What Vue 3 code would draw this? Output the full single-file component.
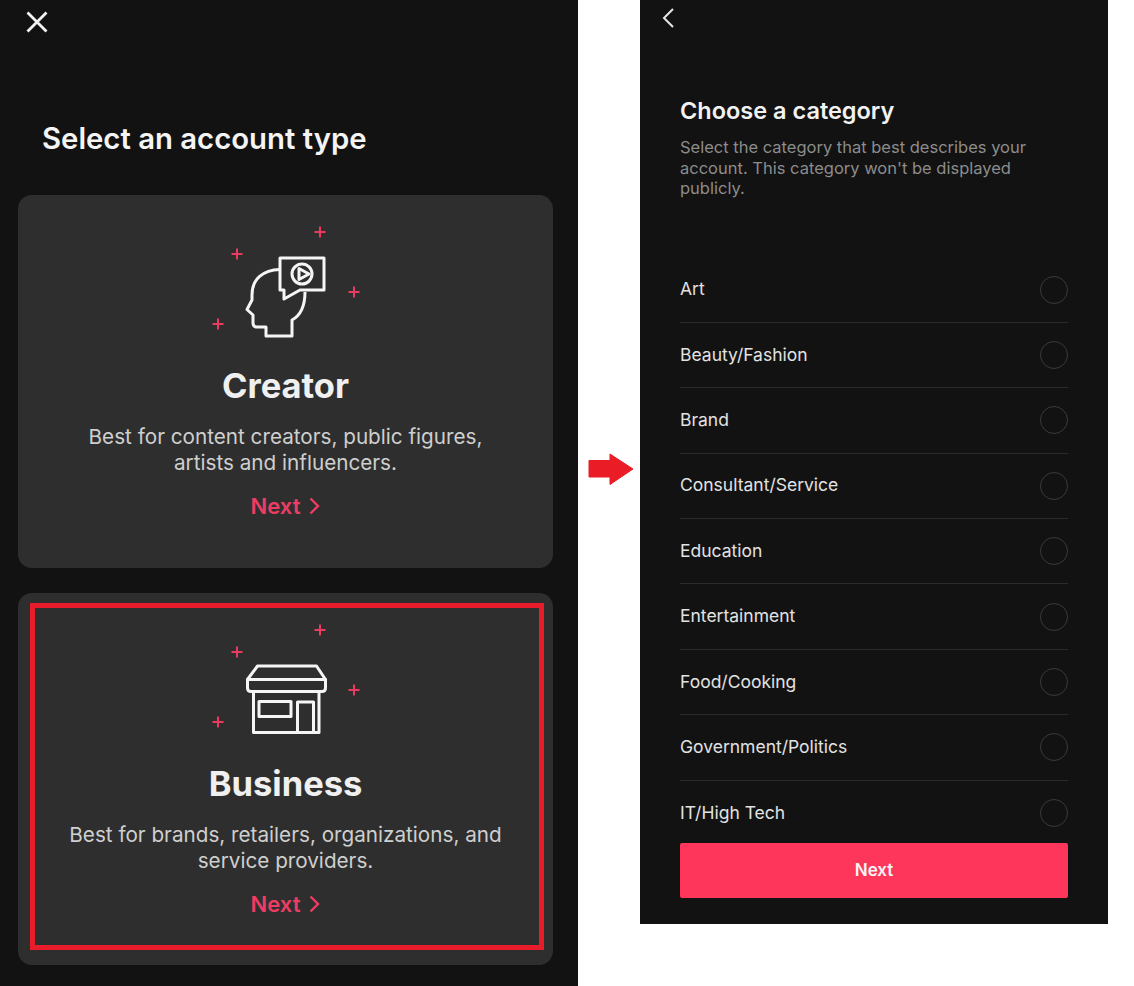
<script setup>
const plus = [
  [120, 22],
  [37, 44],
  [154, 82],
  [18, 114],
]
const categories = [
  'Art',
  'Beauty/Fashion',
  'Brand',
  'Consultant/Service',
  'Education',
  'Entertainment',
  'Food/Cooking',
  'Government/Politics',
  'IT/High Tech',
]
const plusPath = (p) => `M${p[0] - 5.5} ${p[1]}h11M${p[0]} ${p[1] - 5.5}v11`
</script>

<template>
  <div class="page">
    <section class="left">
      <div class="top-bar">
        <svg class="close" width="22" height="22" viewBox="0 0 22 22">
          <path d="M1.5 1.5 20.5 20.5M20.5 1.5 1.5 20.5" fill="none" stroke="#f2f2f2" stroke-width="2.8" />
        </svg>
      </div>
      <h1 class="heading">Select an account type</h1>

      <div class="card">
        <svg class="art" width="171" height="140" viewBox="0 0 171 140">
          <path v-for="p in plus" :key="p[0]" :d="plusPath(p)" class="plus" />
          <g class="line">
            <path d="M80 59.500C63 60 52 69 52 85V90L47 99.500 53 105V113Q53 117 57 117H66V126H92V110Q105 103 105 82" />
            <path d="M80 48H124V80H100L84 89V80H80Z" />
            <circle cx="102" cy="64" r="10" />
            <path d="M99 58.500V69.500L109 64Z" />
          </g>
        </svg>
        <h2 class="name">Creator</h2>
        <p class="desc">Best for content creators, public figures,<br />artists and influencers.</p>
        <div class="next">
          Next
          <svg width="11" height="18" viewBox="0 0 11 18">
            <path d="M1.500 1.500 9 9 1.500 16.500" fill="none" stroke="#ee3c62" stroke-width="2.400" />
          </svg>
        </div>
      </div>

      <div class="card second">
        <svg class="art" width="171" height="140" viewBox="0 0 171 140">
          <path v-for="p in plus" :key="p[0]" :d="plusPath(p)" class="plus" />
          <g class="line">
            <path d="M57.500 58H116.500L125.500 71.500H47.500Z" />
            <path d="M47.500 71.500H125.500V80Q125.500 83.500 122 83.500H51Q47.500 83.500 47.500 80Z" />
            <path d="M53.500 83.500V124.500H119V83.500" />
            <rect x="59" y="93.500" width="32" height="15" />
            <path d="M97.500 124.500V94H113.500V124.500" />
          </g>
        </svg>
        <h2 class="name">Business</h2>
        <p class="desc">Best for brands, retailers, organizations, and<br />service providers.</p>
        <div class="next">
          Next
          <svg width="11" height="18" viewBox="0 0 11 18">
            <path d="M1.500 1.500 9 9 1.500 16.500" fill="none" stroke="#ee3c62" stroke-width="2.400" />
          </svg>
        </div>
        <div class="outline"></div>
      </div>
    </section>

    <div class="gap">
      <svg width="46" height="32" viewBox="0 0 46 32">
        <path d="M1 7.500H22V1L45 16 22 31.500V24H1Z" fill="#ea1c26" stroke="#ea1c26" stroke-linejoin="round" />
      </svg>
    </div>

    <section class="right">
      <svg class="back" width="14" height="22" viewBox="0 0 14 22">
        <path d="M12 2 3 11 12 20" fill="none" stroke="#e6e6e6" stroke-width="2" />
      </svg>
      <h2 class="cat-title">Choose a category</h2>
      <p class="cat-desc">Select the category that best describes your account. This category won't be displayed publicly.</p>
      <ul class="list">
        <li v-for="c in categories" :key="c" class="row">
          <span>{{ c }}</span>
          <i class="radio"></i>
        </li>
      </ul>
      <button class="submit">Next</button>
    </section>
  </div>
</template>

<style>
html,
body {
  background: #fff;
}
</style>

<style scoped>
.page {
  display: flex;
  align-items: flex-start;
  width: 1134px;
  height: 986px;
  overflow: hidden;
  background: #fff;
  font-family: Inter, Lato, sans-serif;
}
.left {
  width: 578px;
  height: 986px;
  box-sizing: border-box;
  padding: 0 25px 0 18px;
  background: #121212;
}
.top-bar {
  height: 44px;
  padding: 11px 0 0 8px;
  box-sizing: border-box;
}
.close {
  display: block;
}
.heading {
  margin: 77px 0 38px 24px;
  height: 36px;
  font-size: 29.300px;
  line-height: 36px;
  font-weight: 600;
  color: #f4f4f4;
}
.card {
  position: relative;
  height: 373px;
  box-sizing: border-box;
  padding-top: 15px;
  border-radius: 14px;
  background: #2e2e2e;
  text-align: center;
}
.second {
  margin-top: 25px;
  height: 372px;
}
.art {
  display: block;
  margin: 0 auto;
}
.plus {
  fill: none;
  stroke: #e93a5f;
  stroke-width: 2;
}
.line {
  fill: none;
  stroke: #f5f5f5;
  stroke-width: 3;
  stroke-linejoin: round;
}
.name {
  margin: 14px 0 0;
  font-size: 34.500px;
  line-height: 44px;
  font-weight: 700;
  color: #f0f0f0;
}
.desc {
  margin: 16px 0 0;
  font-size: 20.700px;
  line-height: 25.500px;
  color: #cfcfcf;
}
.next {
  display: flex;
  justify-content: center;
  align-items: center;
  gap: 9px;
  margin-top: 17px;
  font-size: 22px;
  line-height: 28px;
  font-weight: 600;
  color: #ee3c62;
}
.outline {
  position: absolute;
  left: 12px;
  right: 9px;
  top: 10px;
  bottom: 15px;
  border: 5px solid #e81c2a;
}
.gap {
  width: 62px;
  padding: 453px 0 0 10px;
  box-sizing: border-box;
  line-height: 0;
}
.right {
  width: 468px;
  height: 924px;
  box-sizing: border-box;
  padding: 0 40px;
  background: #121212;
  position: relative;
  display: flex;
  flex-direction: column;
}
.back {
  position: absolute;
  left: 21px;
  top: 7px;
}
.cat-title {
  margin: 97px 0 0;
  font-size: 23.500px;
  line-height: 28px;
  font-weight: 600;
  color: #f2f2f2;
}
.cat-desc {
  margin: 12px 0 0;
  max-width: 360px;
  font-size: 16.500px;
  line-height: 20.500px;
  color: #8c8c8c;
}
.list {
  list-style: none;
  margin: 59px 0 0;
  padding: 0;
  height: 578px;
  overflow: hidden;
}
.row {
  display: flex;
  justify-content: space-between;
  align-items: center;
  height: 65.400px;
  box-sizing: border-box;
  border-bottom: 1px solid #2a2a2a;
  font-size: 17.500px;
  color: #e2e2e2;
}
.row:last-child {
  border-bottom: 0;
}
.row span {
  margin-top: -2px;
}
.radio {
  width: 28px;
  height: 28px;
  box-sizing: border-box;
  border: 1.500px solid #3a3a3a;
  border-radius: 50%;
}
.submit {
  height: 55px;
  margin-top: 7px;
  border: 0;
  border-radius: 2px;
  background: #fe365c;
  color: #f5f5f5;
  font: 600 17px Inter, Lato, sans-serif;
}
</style>
